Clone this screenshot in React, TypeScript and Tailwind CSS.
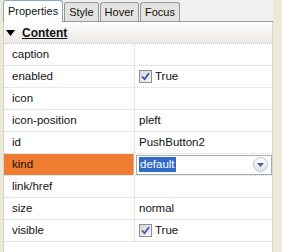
const rows: {name: string; value?: string; check?: boolean; select?: boolean}[] = [
  {name: 'caption'},
  {name: 'enabled', value: 'True', check: true},
  {name: 'icon'},
  {name: 'icon-position', value: 'pleft'},
  {name: 'id', value: 'PushButton2'},
  {name: 'kind', value: 'default', select: true},
  {name: 'link/href'},
  {name: 'size', value: 'normal'},
  {name: 'visible', value: 'True', check: true},
]

function CheckBox() {
  return (
    <span className="w-[13px] h-[13px] border border-[#8a8f98] bg-gradient-to-br from-[#d8d8d8] to-[#f4f4f4] flex items-center justify-center mr-[3px]">
      <svg width="9" height="9" viewBox="0 0 9 9">
        <path d="M1 4.5 L3.5 7.2 L8 1.2" stroke="#3857b3" strokeWidth="1.8" fill="none" />
      </svg>
    </span>
  )
}

function Tab({label, active}: {label: string; active?: boolean}) {
  return (
    <div
      className={`px-[4px] flex items-center border border-b-0 rounded-t-[3px] text-[11px] ${
        active
          ? 'h-[22px] bg-white border-[#8fa7bd] -mb-px z-10'
          : 'h-[19px] bg-[#e4e3e0] border-[#919b9c]'
      }`}
    >
      {label}
    </div>
  )
}

export default function App() {
  return (
    <div className="w-[282px] h-[252px] bg-[#ece9d8] flex text-[11.5px] text-[#111] font-['Liberation_Sans',Arial,sans-serif] leading-none">
      <div className="w-[3px]" />
      <div className="w-[270px] flex flex-col">
        <div className="flex items-end gap-[1px] h-[22px] border-b border-[#919b9c] bg-[#f0f0ee]">
          <Tab label="Properties" active />
          <Tab label="Style" />
          <Tab label="Hover" />
          <Tab label="Focus" />
        </div>
        <div className="bg-white flex-1 border-l border-r border-[#d6d3ca]">
          <div className="h-[22px] flex items-center bg-gradient-to-b from-white to-[#ebe9e4] border-b border-dotted border-[#c8c8c8] pl-[2px] font-bold text-[12px]">
            <svg width="9" height="6" viewBox="0 0 9 6" className="mr-[7px]">
              <path d="M0 0 L9 0 L4.5 6 Z" fill="#000" />
            </svg>
            <span className="underline">Content</span>
          </div>
          {rows.map(r => (
            <div key={r.name} className="h-[22px] flex border-b border-dotted border-[#d4d4d4]">
              <div
                className={`w-[131px] flex items-center pl-[8px] border-r border-dotted border-[#d4d4d4] ${
                  r.select ? 'bg-[#ef7c30]' : ''
                }`}
              >
                {r.name}
              </div>
              <div className="flex-1 flex items-center pl-[4px]">
                {r.select ? (
                  <div className="-ml-[2px] w-[136px] h-[20px] border border-[#a5acb2] flex items-center pl-[2px] pr-[3px]">
                    <span className="bg-[#316ac5] text-white px-px py-[2px]">{r.value}</span>
                    <span className="ml-auto w-[15px] h-[15px] rounded-full border border-[#b8c3d3] bg-gradient-to-b from-white to-[#dde4ee] flex items-center justify-center">
                      <svg width="7" height="4" viewBox="0 0 7 4">
                        <path d="M0 0 L7 0 L3.5 4 Z" fill="#4d6185" />
                      </svg>
                    </span>
                  </div>
                ) : r.check ? (
                  <>
                    <CheckBox />
                    {r.value}
                  </>
                ) : (
                  r.value
                )}
              </div>
            </div>
          ))}
        </div>
      </div>
    </div>
  )
}
